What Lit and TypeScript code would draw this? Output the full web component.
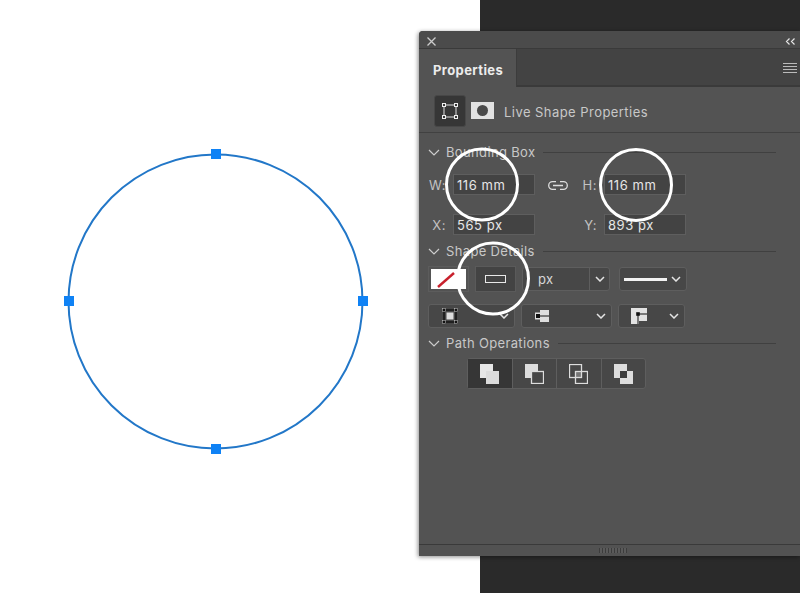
import { LitElement, css, html, svg } from "lit";
import { customElement } from "lit/decorators.js";

const chevron = html`<svg class="chev" viewBox="0 0 10 6" width="10" height="6"><path d="M1 1l4 4 4-4" fill="none" stroke="#e4e4e4" stroke-width="1.5"/></svg>`;
const sectionChevron = html`<svg class="sec-chev" viewBox="0 0 12 7" width="12" height="7"><path d="M1 1l5 5 5-5" fill="none" stroke="#ccc" stroke-width="1.2"/></svg>`;

const pathIcons = [
  svg`<rect x="0" y="0" width="13" height="14" fill="#e6e6e6"/><rect x="6" y="7" width="13" height="13" fill="#dcdcdc"/>`,
  svg`<rect x="0" y="0" width="13" height="14" fill="#ddd"/><rect x="6.5" y="7.5" width="12" height="12" fill="#474747" stroke="#ddd" stroke-width="1.3"/>`,
  svg`<rect x="6.5" y="7.5" width="6" height="6" fill="#777"/><rect x=".5" y=".5" width="12" height="13" fill="none" stroke="#ddd" stroke-width="1.3"/><rect x="6.5" y="7.5" width="12" height="12" fill="none" stroke="#ddd" stroke-width="1.3"/>`,
  svg`<rect x="0" y="0" width="13" height="14" fill="#ddd"/><rect x="6" y="7" width="13" height="13" fill="#ddd"/><rect x="6" y="7" width="7" height="7" fill="#3c3c3c"/>`,
];

@customElement("app-root")
export class AppRoot extends LitElement {
  static styles = css`
    :host {
      display: block;
      position: relative;
      width: 800px;
      height: 593px;
      overflow: hidden;
      background: linear-gradient(90deg, #fff 480px, #2a2a2a 480px);
      font-family: "Inter", "Liberation Sans", sans-serif;
    }
    svg {
      display: block;
      flex: none;
    }
    .canvas {
      position: absolute;
      left: 0;
      top: 0;
    }
    .panel {
      position: absolute;
      left: 419px;
      top: 31px;
      width: 381px;
      height: 525px;
      display: flex;
      flex-direction: column;
      background: #535353;
      border-radius: 4px 0 0 0;
      box-shadow: -1px 1px 4px rgba(0, 0, 0, 0.45);
      color: #d4d4d4;
      overflow: hidden;
    }
    .titlebar {
      height: 18px;
      flex: none;
      display: flex;
      align-items: center;
      justify-content: space-between;
      padding: 4px 4px 0 8px;
      background: #4b4b4b;
      border-bottom: 1px solid #3a3a3a;
      box-sizing: border-box;
    }
    .tabs {
      height: 38px;
      flex: none;
      display: flex;
      background: #434343;
      border-bottom: 2px solid #3a3a3a;
      box-sizing: border-box;
    }
    .tab {
      width: 98px;
      margin-bottom: -2px;
      padding: 0 0 0 14px;
      box-sizing: border-box;
      background: #535353;
      font-size: 13px;
      font-weight: 700;
      letter-spacing: 0.4px;
      line-height: 42px;
      color: #ececec;
      border-right: 1px solid #3c3c3c;
    }
    .menu {
      margin-left: auto;
      padding: 14px 3px 0 0;
    }
    .live {
      height: 46px;
      flex: none;
      display: flex;
      align-items: center;
      padding: 2px 0 0 15px;
      box-sizing: border-box;
      border-bottom: 1px solid #414141;
      font-size: 13px;
      letter-spacing: 0.45px;
      color: #c8c8c8;
    }
    .live span {
      margin-top: 3px;
    }
    .live-btn {
      width: 32px;
      height: 32px;
      display: flex;
      align-items: center;
      justify-content: center;
      background: #363636;
      border: 1px solid #474747;
      border-radius: 3px;
      box-sizing: border-box;
    }
    .live-mask {
      margin: 0 10px 0 5px;
    }
    .section {
      display: flex;
      align-items: center;
      height: 20px;
      padding-left: 9px;
      font-size: 13px;
      letter-spacing: 0.35px;
      color: #c8c8c8;
    }
    .sec-chev {
      margin-right: 6px;
    }
    .rule {
      flex: 1;
      height: 1px;
      margin: 0 24px 0 8px;
      background: #404040;
    }
    .bbox {
      display: grid;
      grid-template-columns: 82px 82px;
      grid-template-rows: 21px 21px;
      column-gap: 69px;
      row-gap: 19px;
      padding: 12px 0 0 34px;
      position: relative;
    }
    .field {
      position: relative;
      background: #434343;
      border: 1px solid #5e5e5e;
      box-sizing: border-box;
      font-size: 13px;
      letter-spacing: 0.55px;
      line-height: 21px;
      padding-left: 3px;
      color: #e6e6e6;
    }
    .field span {
      position: absolute;
      right: 100%;
      margin-right: 8px;
      color: #c2c2c2;
    }
    .link {
      position: absolute;
      left: 129px;
      top: 19px;
    }
    .row {
      display: flex;
      align-items: center;
    }
    .row-a {
      height: 26px;
      margin-top: 5px;
      padding-left: 9px;
    }
    .swatch-box {
      width: 41px;
      height: 26px;
      display: flex;
      align-items: center;
      justify-content: center;
      border: 1px solid #5c5c5c;
      box-sizing: border-box;
      margin-right: 6px;
    }
    .swatch {
      width: 35px;
      height: 20px;
    }
    .stroke {
      width: 41px;
      height: 26px;
      display: flex;
      align-items: center;
      justify-content: center;
      background: #434343;
      border: 1px solid #5a5a5a;
      box-sizing: border-box;
      margin-right: 6px;
    }
    .stroke i {
      display: block;
      width: 21px;
      height: 8px;
      border: 1.5px solid #e8e8e8;
      box-sizing: border-box;
    }
    .select {
      display: flex;
      align-items: center;
      justify-content: space-between;
      height: 24px;
      padding: 0 5px 0 8px;
      box-sizing: border-box;
      background: #474747;
      border: 1px solid #5e5e5e;
      border-radius: 3px;
      font-size: 13px;
      letter-spacing: 0.4px;
      color: #d8d8d8;
    }
    .px {
      width: 88px;
      margin-right: 9px;
      padding: 0 0 0 15px;
    }
    .px b {
      display: flex;
      align-items: center;
      justify-content: center;
      width: 19px;
      height: 100%;
      border-left: 1px solid #5e5e5e;
    }
    .line {
      width: 68px;
      padding-left: 4px;
    }
    .line i {
      display: block;
      width: 43px;
      height: 3px;
      background: #f2f2f2;
    }
    .row-b {
      height: 24px;
      margin-top: 12px;
      padding-left: 9px;
      gap: 6px;
    }
    .sel-join {
      width: 87px;
      padding-left: 13px;
    }
    .sel-cap {
      width: 91px;
      padding-left: 13px;
    }
    .sel-corner {
      width: 67px;
      padding-left: 12px;
    }
    .ops {
      display: flex;
      width: 179px;
      height: 31px;
      margin: 5px 0 0 48px;
      background: #474747;
      border: 1px solid #5e5e5e;
      border-radius: 3px;
      box-sizing: border-box;
    }
    .ops div {
      flex: 1;
      display: flex;
      align-items: center;
      justify-content: center;
      border-left: 1px solid #5e5e5e;
    }
    .ops div:first-child {
      border-left: 0;
      background: #363636;
    }
    .grow {
      flex: 1;
    }
    .footer {
      height: 11px;
      flex: none;
      display: flex;
      justify-content: center;
      align-items: center;
      padding-left: 6px;
      background: #525252;
      border-top: 1px solid #3a3a3a;
    }
    .grip {
      width: 28px;
      height: 5px;
      background: repeating-linear-gradient(90deg, #3c3c3c 0 1px, #5a5a5a 1px 3px);
    }
    .marks {
      position: absolute;
      left: 0;
      top: 0;
      pointer-events: none;
    }
  `;

  render() {
    return html`
      <svg class="canvas" width="480" height="593">
        <circle cx="215.5" cy="301.5" r="147" fill="none" stroke="#2277c8" stroke-width="2"/>
        <rect x="211" y="149" width="10" height="10" fill="#0f82f5"/>
        <rect x="211" y="444" width="10" height="10" fill="#0f82f5"/>
        <rect x="64" y="296" width="10" height="10" fill="#0f82f5"/>
        <rect x="358" y="296" width="10" height="10" fill="#0f82f5"/>
      </svg>
      <div class="panel">
        <div class="titlebar">
          <svg width="9" height="9" viewBox="0 0 9 9"><path d="M.5.5l8 8M8.5.5l-8 8" stroke="#ccc" stroke-width="1.3"/></svg>
          <svg width="11" height="7" viewBox="0 0 11 7"><path d="M4.5.5L1.5 3.5l3 3M9.5.5l-3 3 3 3" fill="none" stroke="#e4e4e4" stroke-width="1.2"/></svg>
        </div>
        <div class="tabs">
          <div class="tab">Properties</div>
          <div class="menu">
            <svg width="14" height="11" viewBox="0 0 14 11"><path d="M0 .5h14M0 3.5h14M0 6.5h14M0 9.5h14" stroke="#bbb" stroke-width="1.2"/></svg>
          </div>
        </div>
        <div class="live">
          <div class="live-btn">
            <svg width="16" height="16" viewBox="0 0 16 16">
              <rect x="2" y="2" width="12" height="12" fill="none" stroke="#ddd" stroke-width="1"/>
              <g fill="#363636" stroke="#eee" stroke-width="1">
                <rect x=".5" y=".5" width="3" height="3"/><rect x="12.5" y=".5" width="3" height="3"/>
                <rect x=".5" y="12.5" width="3" height="3"/><rect x="12.5" y="12.5" width="3" height="3"/>
              </g>
            </svg>
          </div>
          <svg class="live-mask" width="23" height="17" viewBox="0 0 23 17"><rect width="23" height="17" fill="#e2e2e2"/><circle cx="11.5" cy="8.5" r="5.5" fill="#4a4a4a"/></svg>
          <span>Live Shape Properties</span>
        </div>
        <div class="section" style="margin-top:9px">${sectionChevron}Bounding Box<div class="rule"></div></div>
        <div class="bbox">
          <div class="field"><span>W:</span>116 mm</div>
          <div class="field"><span>H:</span>116 mm</div>
          <div class="field"><span>X:</span>565 px</div>
          <div class="field"><span>Y:</span>893 px</div>
          <svg class="link" width="20" height="9" viewBox="0 0 20 9"><path d="M8 .7H4.5a3.8 3.8 0 000 7.6H8M12 .7h3.5a3.8 3.8 0 010 7.6H12M5 4.5h10" fill="none" stroke="#ddd" stroke-width="1.3"/></svg>
        </div>
        <div class="section" style="margin-top:6px">${sectionChevron}Shape Details<div class="rule"></div></div>
        <div class="row row-a">
          <div class="swatch-box">
            <svg class="swatch" viewBox="0 0 35 20"><rect width="35" height="20" fill="#fff"/><path d="M7 18L23 4" stroke="#c8202c" stroke-width="2.4"/></svg>
          </div>
          <div class="stroke"><i></i></div>
          <div class="select px">px<b>${chevron}</b></div>
          <div class="select line"><i></i>${chevron}</div>
        </div>
        <div class="row row-b">
          <div class="select sel-join">
            <svg width="16" height="16" viewBox="0 0 16 16"><rect x="2" y="2" width="12" height="12" fill="none" stroke="#111" stroke-width="1.4"/><rect x="4.5" y="4.5" width="7" height="7" fill="#ddd"/><g fill="#111" stroke="#ccc" stroke-width=".5"><rect x=".3" y=".3" width="3" height="3"/><rect x="12.7" y=".3" width="3" height="3"/><rect x=".3" y="12.7" width="3" height="3"/><rect x="12.7" y="12.7" width="3" height="3"/></g></svg>
            ${chevron}
          </div>
          <div class="select sel-cap">
            <svg width="14" height="12" viewBox="0 0 14 12"><rect x="0" y="2.5" width="6" height="7" fill="#ddd"/><rect x="5" y="0" width="9" height="12" fill="#ddd"/><path d="M3 6h11" stroke="#111" stroke-width="1"/><rect x="1" y="4" width="4" height="4" fill="#111"/></svg>
            ${chevron}
          </div>
          <div class="select sel-corner">
            <svg width="16" height="16" viewBox="0 0 16 16"><path d="M0 0h16v13H8v3H0z" fill="#e2e2e2"/><path d="M7 6h9M7 6v10" stroke="#111" stroke-width="1"/><rect x="5.2" y="4.2" width="3.6" height="3.6" fill="#111"/></svg>
            ${chevron}
          </div>
        </div>
        <div class="section" style="margin-top:5px">${sectionChevron}Path Operations<div class="rule"></div></div>
        <div class="ops">
          ${pathIcons.map((icon) => html`<div><svg width="19" height="20" viewBox="0 0 19 20">${icon}</svg></div>`)}
        </div>
        <div class="grow"></div>
        <div class="footer"><div class="grip"></div></div>
      </div>
      <svg class="marks" width="800" height="593">
        <g fill="none" stroke="#fff" stroke-width="3">
          <circle cx="482" cy="184.5" r="35.5"/>
          <circle cx="636" cy="185" r="35.5"/>
          <circle cx="493" cy="278.5" r="35.5"/>
        </g>
      </svg>
    `;
  }
}
